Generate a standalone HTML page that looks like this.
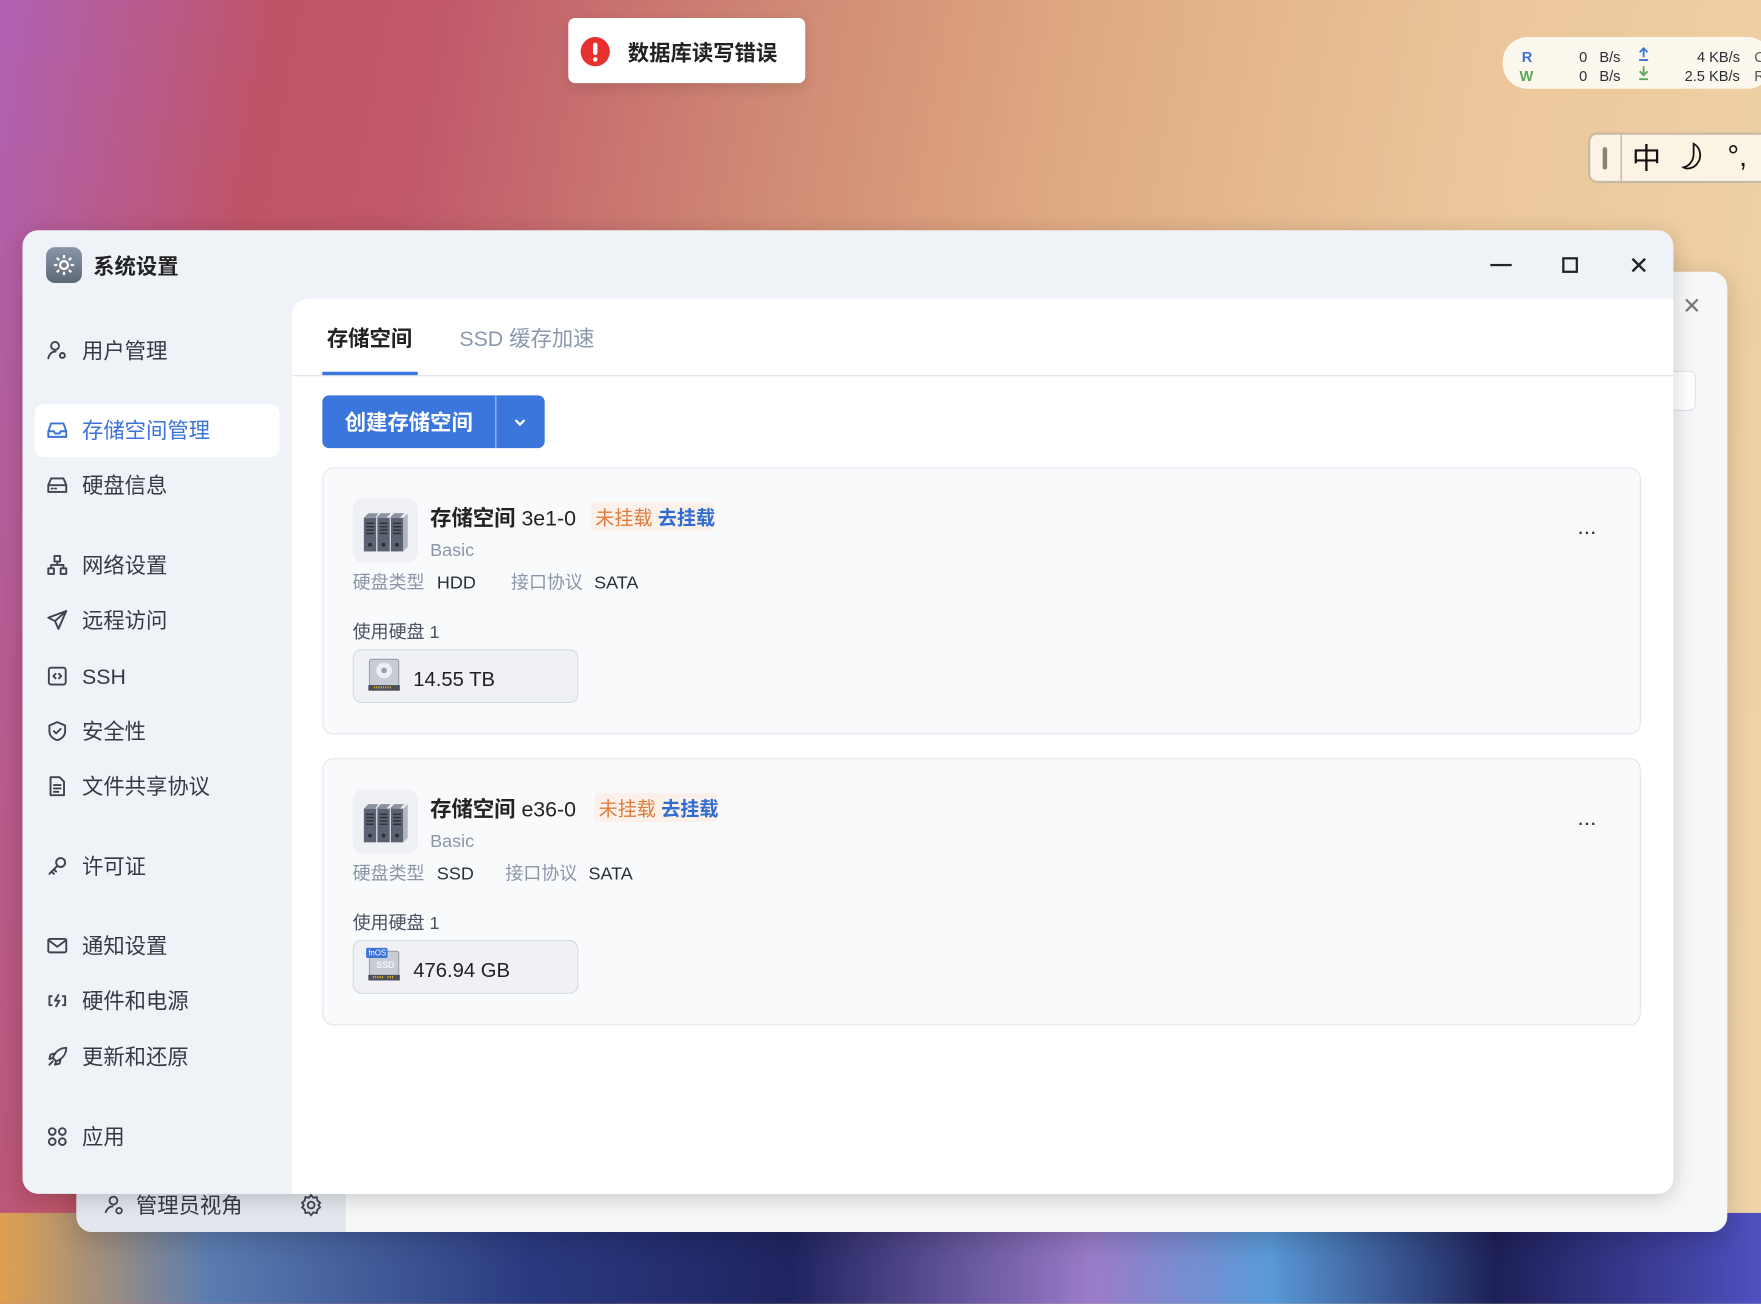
<!DOCTYPE html>
<html><head><meta charset="utf-8">
<style>
*{box-sizing:border-box;margin:0;padding:0}
html,body{width:1761px;height:1304px;overflow:hidden}
body{font-family:"Liberation Sans","Noto Sans CJK SC",sans-serif;color:#2b2f36}
#s{position:absolute;left:0;top:0;width:1568px;height:1161px;transform:scale(1.12309);transform-origin:0 0;overflow:hidden;
background:linear-gradient(100deg,#b062b4 0%,#bf5468 14%,#c0586a 22%,#d08a74 40%,#dfaa82 55%,#ebc69a 75%,#f1d6aa 100%)}
.ab{position:absolute}
.bottombg{position:absolute;left:0;top:1080px;width:1568px;height:81px;background:linear-gradient(90deg,#e0a050 0%,#5a7cb0 12%,#2a3a80 30%,#202460 45%,#9a7cc8 62%,#5a9ad8 72%,#1e2058 85%,#5050c0 100%)}
.t{position:absolute;white-space:nowrap;line-height:1;margin-top:2px}
.nav .t{font-size:19px;color:#333a44;left:73px}
.nav svg{position:absolute;left:41px;width:20px;height:20px;fill:none;stroke:#3d444e;stroke-width:1.7;stroke-linecap:round;stroke-linejoin:round}
.card{position:absolute;left:287px;width:1174px;height:238px;background:#f9fafc;border:1px solid #e2e6ed;border-radius:10px}
.g{color:#8a96a8}
</style></head><body><div id="s">
<div class="bottombg"></div>
<div class="ab" style="left:506px;top:16px;width:211px;height:58px;background:#fff;border-radius:6px;box-shadow:0 4px 12px rgba(0,0,0,.12)"></div>
<div class="ab" style="left:517px;top:33px;width:26px;height:26px;border-radius:50%;background:#e8302f"></div>
<div class="ab" style="left:528px;top:38px;width:4px;height:11px;background:#fff;border-radius:2px"></div>
<div class="ab" style="left:528px;top:51px;width:4px;height:4px;background:#fff;border-radius:2px"></div>
<div class="t" style="left:559px;top:37px;font-size:19px;font-weight:bold;color:#222">数据库读写错误</div>
<div class="ab" style="left:1338px;top:33px;width:240px;height:46px;background:#fdf8ee;border-radius:22px"></div>
<div class="t" style="left:1355px;top:42px;font-size:13px;color:#3a72d8;font-weight:bold">R</div>
<div class="t" style="left:1353px;top:59px;font-size:13px;color:#5aa65a;font-weight:bold">W</div>
<div class="t" style="left:1406px;top:42px;font-size:13px">0&nbsp;&nbsp; B/s</div>
<div class="t" style="left:1406px;top:59px;font-size:13px">0&nbsp;&nbsp; B/s</div>
<svg class="ab" style="left:1458px;top:41px" width="11" height="14" viewBox="0 0 11 14" fill="none" stroke="#3a72d8" stroke-width="1.6"><path d="M5.5 10V2M2 5.5l3.5-3.5 3.5 3.5M1.5 12.5h8"/></svg>
<svg class="ab" style="left:1458px;top:58px" width="11" height="14" viewBox="0 0 11 14" fill="none" stroke="#5aa65a" stroke-width="1.6"><path d="M5.5 1v8M2 5.5l3.5 3.5 3.5-3.5M1.5 12.5h8"/></svg>
<div class="t" style="left:1511px;top:42px;font-size:13px">4 KB/s</div>
<div class="t" style="left:1500px;top:59px;font-size:13px">2.5 KB/s</div>
<div class="t" style="left:1562px;top:42px;font-size:13px;color:#555">C</div>
<div class="t" style="left:1562px;top:59px;font-size:13px;color:#555">R</div>
<div class="ab" style="left:1414px;top:118px;width:170px;height:45px;background:#fbf3e4;border:2px solid #c8baa4;border-radius:8px"></div>
<div class="ab" style="left:1443px;top:120px;width:1px;height:41px;background:#b8a890"></div>
<div class="ab" style="left:1427px;top:131px;width:4px;height:20px;background:#8a8278;border-radius:2px"></div>
<div class="t" style="left:1453px;top:126px;font-size:26px;color:#111">中</div>
<svg class="ab" style="left:1496px;top:126px" width="28" height="30" viewBox="0 0 28 30" fill="none" stroke="#111" stroke-width="1.6"><path d="M12 2c6 3 8 12 3 18-3 4-9 5-12 3 5-1 9-6 9-12 0-4 0-7 0-9z"/></svg>
<div class="t" style="left:1538px;top:124px;font-size:26px;color:#111">°,</div>
<div class="ab" style="left:68px;top:242px;width:1470px;height:855px;background:#f6f7f9;border-radius:14px;box-shadow:0 6px 24px rgba(0,0,0,.18)"></div>
<div class="ab" style="left:68px;top:1062px;width:240px;height:35px;background:#e3e7ed;border-bottom-left-radius:14px"></div>
<div class="ab" style="left:1490px;top:330px;width:20px;height:36px;border:1px solid #dde1e8;border-left:none;border-radius:0 6px 6px 0;background:#fff"></div>
<div class="t" style="left:1498px;top:261px;font-size:20px;color:#777">✕</div>
<svg class="ab" style="left:92px;top:1063px" width="20" height="20" viewBox="0 0 20 20" fill="none" stroke="#3d444e" stroke-width="1.6"><circle cx="9" cy="6" r="3.5"/><path d="M2 17c1-4 4-6 7-6"/><circle cx="14" cy="15" r="2.5"/></svg>
<div class="t" style="left:121px;top:1063px;font-size:19px;color:#333a44">管理员视角</div>
<svg class="ab" style="left:266px;top:1062px" width="22" height="22" viewBox="0 0 22 22" fill="none" stroke="#3d444e" stroke-width="1.6"><circle cx="11" cy="11" r="3"/><path d="M11 2l2 2.5 3-.6.6 3L19 9l-1.5 2 1.5 2-2.4 2.1-.6 3-3-.6L11 20l-2-2.5-3 .6-.6-3L3 13l1.5-2L3 9l2.4-2.1.6-3 3 .6z"/></svg>
<div class="ab" style="left:20px;top:205px;width:1470px;height:858px;background:#eff3f8;border-radius:14px;box-shadow:0 4px 20px rgba(0,0,0,.18);overflow:hidden">
 <div class="ab" style="left:240px;top:61px;width:1230px;height:797px;background:#fff;border-top-left-radius:14px"></div>
</div>
<div class="ab" style="left:41px;top:220px;width:32px;height:32px;border-radius:8px;background:linear-gradient(#8a96a8,#5d6878)"></div>
<svg class="ab" style="left:45px;top:224px" width="24" height="24" viewBox="0 0 24 24" fill="none" stroke="#fff" stroke-width="2"><circle cx="12" cy="12" r="3.5"/><path d="M12 3v3M12 18v3M3 12h3M18 12h3M5.6 5.6l2.1 2.1M16.3 16.3l2.1 2.1M5.6 18.4l2.1-2.1M16.3 7.7l2.1-2.1"/></svg>
<div class="t" style="left:83px;top:227px;font-size:19px;font-weight:bold;color:#222">系统设置</div>
<div class="ab" style="left:1327px;top:235px;width:19px;height:2px;background:#222"></div>
<div class="ab" style="left:1391px;top:229px;width:14px;height:14px;border:2px solid #222"></div>
<div class="t" style="left:1450px;top:224px;font-size:22px;color:#222">✕</div>
<div class="ab" style="left:31px;top:360px;width:218px;height:47px;background:#fff;border-radius:8px"></div>
<div class="nav">
<svg style="top:302px" viewBox="0 0 20 20"><circle cx="8" cy="6" r="3.5"/><path d="M2 17c1-4 3.5-6 6.5-6"/><circle cx="14.5" cy="14.5" r="2.2"/></svg><div class="t" style="top:302px">用户管理</div>
<svg style="top:373px;stroke:#3a72d8" viewBox="0 0 20 20"><path d="M2 11l2.5-7h11l2.5 7v5H2zM2 11h5l1 2h4l1-2h5"/></svg><div class="t" style="top:373px;color:#3a72d8">存储空间管理</div>
<svg style="top:422px" viewBox="0 0 20 20"><path d="M2 10l2.5-6h11l2.5 6v6H2zM2 10h16M5 13h1M8 13h1"/></svg><div class="t" style="top:422px">硬盘信息</div>
<svg style="top:493px" viewBox="0 0 20 20"><rect x="7.5" y="2" width="5" height="5"/><rect x="2" y="13" width="5" height="5"/><rect x="13" y="13" width="5" height="5"/><path d="M10 7v3M4.5 13v-3h11v3"/></svg><div class="t" style="top:493px">网络设置</div>
<svg style="top:542px" viewBox="0 0 20 20"><path d="M18 2L2 8l6 3 3 7zM8 11l10-9"/></svg><div class="t" style="top:542px">远程访问</div>
<svg style="top:592px" viewBox="0 0 20 20"><rect x="2.5" y="2.5" width="15" height="15" rx="2"/><path d="M8.5 8l-2 2 2 2M11.5 8l2 2-2 2"/></svg><div class="t" style="top:592px">SSH</div>
<svg style="top:641px" viewBox="0 0 20 20"><path d="M10 2l7 3v5c0 4-3 7-7 8-4-1-7-4-7-8V5zM7 10l2 2 4-4"/></svg><div class="t" style="top:641px">安全性</div>
<svg style="top:690px" viewBox="0 0 20 20"><path d="M4 2h8l4 4v12H4zM7 9h6M7 12h6M7 15h4"/></svg><div class="t" style="top:690px">文件共享协议</div>
<svg style="top:761px" viewBox="0 0 20 20"><circle cx="13" cy="7" r="4"/><path d="M10 10l-7 7M5 15l2 2M7 13l2 2"/></svg><div class="t" style="top:761px">许可证</div>
<svg style="top:832px" viewBox="0 0 20 20"><rect x="2" y="4" width="16" height="12" rx="1.5"/><path d="M2 5l8 6 8-6"/></svg><div class="t" style="top:832px">通知设置</div>
<svg style="top:881px" viewBox="0 0 20 20"><path d="M5 6H3v8h2M15 6h2v8h-2M11 5l-3 5h4l-3 5"/></svg><div class="t" style="top:881px">硬件和电源</div>
<svg style="top:931px" viewBox="0 0 20 20"><path d="M18 2c-6 0-10 4-12 9l3 3c5-2 9-6 9-12zM6 11l-3 1 1-4 4-1M9 14l-1 3 4-1 1-4M3 17l3-3"/></svg><div class="t" style="top:931px">更新和还原</div>
<svg style="top:1002px" viewBox="0 0 20 20"><circle cx="5.5" cy="5.5" r="3"/><circle cx="14.5" cy="5.5" r="3"/><circle cx="5.5" cy="14.5" r="3"/><circle cx="14.5" cy="14.5" r="3"/></svg><div class="t" style="top:1002px">应用</div>
</div>
<div class="t" style="left:291px;top:291px;font-size:19px;font-weight:bold;color:#222">存储空间</div>
<div class="t" style="left:409px;top:291px;font-size:19px;color:#8a98ad">SSD 缓存加速</div>
<div class="ab" style="left:260px;top:334px;width:1230px;height:1px;background:#dde2ea"></div>
<div class="ab" style="left:287px;top:331px;width:85px;height:3px;background:#3a78e0"></div>
<div class="ab" style="left:287px;top:352px;width:198px;height:47px;background:#3b76dd;border-radius:6px"></div>
<div class="ab" style="left:441px;top:352px;width:1px;height:47px;background:#a9c3f0"></div>
<div class="t" style="left:307px;top:366px;font-size:19px;font-weight:bold;color:#fff">创建存储空间</div>
<svg class="ab" style="left:457px;top:370px" width="12" height="12" viewBox="0 0 12 12" fill="none" stroke="#fff" stroke-width="2"><path d="M2 4l4 4 4-4"/></svg>
<div class="card" style="top:416px"></div>
<div class="card" style="top:675px"></div>
<div class="ab" style="left:0;top:416px;width:1568px;height:238px">
 <div class="ab" style="left:314px;top:28px;width:58px;height:57px;background:#eef0f4;border-radius:9px"></div>
 <svg class="ab" style="left:323px;top:39px" width="42" height="38" viewBox="0 0 42 38"><g fill="#5c6272"><rect x="1" y="6" width="11" height="30"/><rect x="13" y="6" width="11" height="30"/><rect x="25" y="6" width="11" height="30"/></g><path d="M12 6l4-4h9l-4 4zM24 6l4-4h9l-4 4zM1 6l4-4h9l-3 4" fill="#8a90a0"/><path d="M36 6l4-4v30l-4 4z" fill="#b0b4c0"/><g stroke="#2a2e38" stroke-width="1.2"><path d="M3 11h7M3 14h7M3 17h7M3 20h7M15 11h7M15 14h7M15 17h7M15 20h7M27 11h7M27 14h7M27 17h7M27 20h7"/></g><g fill="#2a2e38"><circle cx="6.5" cy="30" r="1.7"/><circle cx="18.5" cy="30" r="1.7"/><circle cx="30.5" cy="30" r="1.7"/></g></svg>
 <div class="t" style="left:383px;top:35px;font-size:19px;color:#222"><b>存储空间</b> 3e1-0</div>
 <div class="ab" style="left:526px;top:31px;width:110px;height:26px;background:#fbf1ea;border-radius:4px"></div>
 <div class="t" style="left:530px;top:35px;font-size:17px;color:#e07b3a">未挂载 <b style="color:#2f6bd0">去挂载</b></div>
 <div class="t g" style="left:383px;top:65px;font-size:16px">Basic</div>
 <div class="t g" style="left:314px;top:94px;font-size:16px">硬盘类型</div>
 <div class="t" style="left:389px;top:94px;font-size:16px">HDD</div>
 <div class="t g" style="left:455px;top:94px;font-size:16px">接口协议</div>
 <div class="t" style="left:529px;top:94px;font-size:16px">SATA</div>
 <div class="t" style="left:314px;top:138px;font-size:16px;color:#4a5260">使用硬盘 1</div>
 <div class="ab" style="left:314px;top:162px;width:201px;height:48px;background:#f0f1f4;border:1px solid #d6dae2;border-radius:8px"></div>
 <svg class="ab" style="left:327px;top:170px" width="30" height="30" viewBox="0 0 30 30"><rect x="2" y="1" width="26" height="24" rx="2" fill="#c8ccd4" stroke="#9aa0aa"/><circle cx="15" cy="11" r="7" fill="#eceef2"/><circle cx="15" cy="11" r="2.5" fill="#9aa0aa"/><rect x="1" y="24" width="28" height="5" fill="#4a4e58"/><path d="M6 26h16" stroke="#e0b030" stroke-width="2" stroke-dasharray="1 1"/></svg>
 <div class="t" style="left:368px;top:178px;font-size:18px;color:#222">14.55 TB</div>
 <div class="t" style="left:1404px;top:46px;font-size:20px;color:#333;letter-spacing:-1px">···</div>
</div>
<div class="ab" style="left:0;top:675px;width:1568px;height:238px">
 <div class="ab" style="left:314px;top:28px;width:58px;height:57px;background:#eef0f4;border-radius:9px"></div>
 <svg class="ab" style="left:323px;top:39px" width="42" height="38" viewBox="0 0 42 38"><g fill="#5c6272"><rect x="1" y="6" width="11" height="30"/><rect x="13" y="6" width="11" height="30"/><rect x="25" y="6" width="11" height="30"/></g><path d="M12 6l4-4h9l-4 4zM24 6l4-4h9l-4 4zM1 6l4-4h9l-3 4" fill="#8a90a0"/><path d="M36 6l4-4v30l-4 4z" fill="#b0b4c0"/><g stroke="#2a2e38" stroke-width="1.2"><path d="M3 11h7M3 14h7M3 17h7M3 20h7M15 11h7M15 14h7M15 17h7M15 20h7M27 11h7M27 14h7M27 17h7M27 20h7"/></g><g fill="#2a2e38"><circle cx="6.5" cy="30" r="1.7"/><circle cx="18.5" cy="30" r="1.7"/><circle cx="30.5" cy="30" r="1.7"/></g></svg>
 <div class="t" style="left:383px;top:35px;font-size:19px;color:#222"><b>存储空间</b> e36-0</div>
 <div class="ab" style="left:529px;top:31px;width:110px;height:26px;background:#fbf1ea;border-radius:4px"></div>
 <div class="t" style="left:533px;top:35px;font-size:17px;color:#e07b3a">未挂载 <b style="color:#2f6bd0">去挂载</b></div>
 <div class="t g" style="left:383px;top:65px;font-size:16px">Basic</div>
 <div class="t g" style="left:314px;top:94px;font-size:16px">硬盘类型</div>
 <div class="t" style="left:389px;top:94px;font-size:16px">SSD</div>
 <div class="t g" style="left:450px;top:94px;font-size:16px">接口协议</div>
 <div class="t" style="left:524px;top:94px;font-size:16px">SATA</div>
 <div class="t" style="left:314px;top:138px;font-size:16px;color:#4a5260">使用硬盘 1</div>
 <div class="ab" style="left:314px;top:162px;width:201px;height:48px;background:#f0f1f4;border:1px solid #d6dae2;border-radius:8px"></div>
 <svg class="ab" style="left:325px;top:168px" width="34" height="32" viewBox="0 0 34 32"><rect x="4" y="4" width="26" height="22" rx="2" fill="#c8ccd4" stroke="#9aa0aa"/><text x="10" y="19" font-size="8" font-weight="bold" fill="#f4f4f6" font-family="Liberation Sans">SSD</text><rect x="3" y="25" width="28" height="5" fill="#4a4e58"/><path d="M7 27h10M20 27h6" stroke="#e0b030" stroke-width="2" stroke-dasharray="1 1"/><rect x="1" y="1" width="19" height="9" rx="1.5" fill="#3a72d8"/><text x="3" y="8" font-size="7" fill="#fff" font-family="Liberation Sans">fnOS</text></svg>
 <div class="t" style="left:368px;top:178px;font-size:18px;color:#222">476.94 GB</div>
 <div class="t" style="left:1404px;top:46px;font-size:20px;color:#333;letter-spacing:-1px">···</div>
</div>
</div></body></html>
